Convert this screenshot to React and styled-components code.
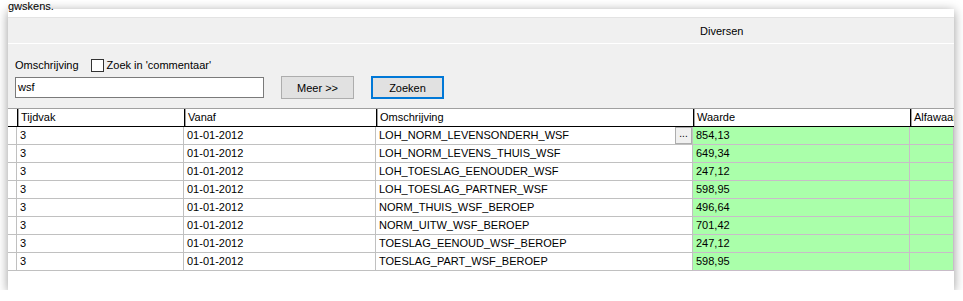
import React from "react";
import styled, { createGlobalStyle } from "styled-components";

const GlobalStyle = createGlobalStyle`
  html, body {
    margin: 0;
    padding: 0;
    background: #ffffff;
    font-family: "Liberation Sans", Arial, sans-serif;
    font-size: 11px;
    color: #000;
  }
`;

const Window = styled.div`
  width: 946px;
  margin: 9px 0 0 8px;
  background: #f0f0f0;
  box-shadow: 0 2px 10px rgba(0, 0, 0, 0.4);
`;

const TopStrip = styled.div`
  display: flow-root;
  height: 8px;
  background: #fff;
  border-bottom: 1px solid #e3e3e3;
  overflow: visible;
`;

const Clipped = styled.div`
  margin-top: -10px;
  font-size: 11px;
  line-height: 14px;
`;

const TabBar = styled.div`
  height: 25px;
  display: flex;
  align-items: center;
  padding-left: 692px;
  border-bottom: 1px solid #ffffff;
`;

const Form = styled.div`
  height: 65px;
  padding: 14px 0 0 7px;
  box-sizing: border-box;
  border-bottom: 1px solid #a0a0a0;
`;

const LabelRow = styled.div`
  display: flex;
  align-items: center;
  height: 14px;
`;

const Label = styled.span`
  margin-right: 12px;
`;

const Check = styled.span`
  width: 11px;
  height: 11px;
  border: 1px solid #333;
  background: #fff;
  margin-right: 3px;
`;

const InputRow = styled.div`
  display: flex;
  align-items: center;
  margin-top: 4px;
`;

const TextInput = styled.div`
  width: 245px;
  height: 19px;
  border: 1px solid #7a7a7a;
  background: #fff;
  padding-left: 2px;
  line-height: 19px;
  margin-right: 17px;
`;

const Button = styled.div`
  width: ${(p) => (p.$primary ? 69 : 71)}px;
  height: ${(p) => (p.$primary ? 19 : 21)}px;
  border: ${(p) => (p.$primary ? "2px solid #0078d7" : "1px solid #adadad")};
  background: #e1e1e1;
  display: flex;
  align-items: center;
  justify-content: center;
  margin-right: ${(p) => (p.$primary ? 0 : 17)}px;
`;

const Grid = styled.div`
  display: grid;
  grid-template-columns: 9px 167px 192px 317px 217px 1fr;
  background: #fff;
  padding-bottom: 19px;
  overflow: hidden;
`;

const Head = styled.div`
  height: 17px;
  line-height: 17px;
  padding-left: 3px;
  border-left: ${(p) => (p.$first ? "none" : "1px solid #000")};
  border-bottom: 1px solid #000;
  white-space: nowrap;
  overflow: hidden;
  box-shadow: ${(p) => (p.$first ? "none" : "inset 1px 0 0 #a0a0a0")};
  background: #fff;
`;

const Cell = styled.div`
  position: relative;
  height: 17px;
  line-height: 17px;
  padding-left: 3px;
  border-right: 1px solid ${(p) => (p.$green ? "#c8bcc8" : "#c0c0c0")};
  border-bottom: 1px solid ${(p) => (p.$green ? "#c8bcc8" : "#c0c0c0")};
  background: ${(p) => (p.$green ? "#aaffaa" : "#fff")};
  white-space: nowrap;
  overflow: hidden;
`;

const Ellipsis = styled.span`
  position: absolute;
  right: 0;
  top: 0;
  width: 15px;
  height: 15px;
  border: 1px solid #adadad;
  background: #f0f0f0;
  font-size: 10px;
  line-height: 12px;
  text-align: center;
`;

const rows = [
  ["LOH_NORM_LEVENSONDERH_WSF", "854,13"],
  ["LOH_NORM_LEVENS_THUIS_WSF", "649,34"],
  ["LOH_TOESLAG_EENOUDER_WSF", "247,12"],
  ["LOH_TOESLAG_PARTNER_WSF", "598,95"],
  ["NORM_THUIS_WSF_BEROEP", "496,64"],
  ["NORM_UITW_WSF_BEROEP", "701,42"],
  ["TOESLAG_EENOUD_WSF_BEROEP", "247,12"],
  ["TOESLAG_PART_WSF_BEROEP", "598,95"],
];

export default function App() {
  return (
    <>
      <GlobalStyle />
      <Window>
        <TopStrip>
          <Clipped>gwskens.</Clipped>
        </TopStrip>
        <TabBar>Diversen</TabBar>
        <Form>
          <LabelRow>
            <Label>Omschrijving</Label>
            <Check />
            <span>Zoek in 'commentaar'</span>
          </LabelRow>
          <InputRow>
            <TextInput>wsf</TextInput>
            <Button>Meer &gt;&gt;</Button>
            <Button $primary>Zoeken</Button>
          </InputRow>
        </Form>
        <Grid>
          <Head $first />
          <Head>Tijdvak</Head>
          <Head>Vanaf</Head>
          <Head>Omschrijving</Head>
          <Head>Waarde</Head>
          <Head>Alfawaarde</Head>
          {rows.map(([name, value], i) => (
            <React.Fragment key={i}>
              <Cell />
              <Cell>3</Cell>
              <Cell>01-01-2012</Cell>
              <Cell>
                {name}
                {i === 0 && <Ellipsis>...</Ellipsis>}
              </Cell>
              <Cell $green>{value}</Cell>
              <Cell $green />
            </React.Fragment>
          ))}
        </Grid>
      </Window>
    </>
  );
}
